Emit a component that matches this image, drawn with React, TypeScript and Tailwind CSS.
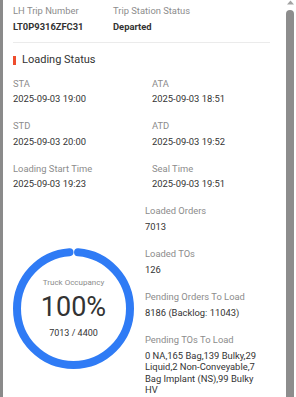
import React from "react";

const Item = ({ label, value, className = "" }: { label: string; value: React.ReactNode; className?: string }) => (
  <div className={className}>
    <div className="text-[9.4px] leading-[11.5px] text-[#8c8c8c]">{label}</div>
    <div className="mt-[4px] text-[9.4px] leading-[11.5px] text-[#333]">{value}</div>
  </div>
);

function Ring() {
  const size = 121;
  const sw = 8;
  const r = (size - sw) / 2;
  const c = 2 * Math.PI * r;
  const gap = 9.3;
  return (
    <div className="relative w-[121px] h-[121px] shrink-0">
      <svg width={size} height={size} viewBox={`0 0 ${size} ${size}`} className="block">
        <circle
          cx={size / 2}
          cy={size / 2}
          r={r}
          fill="none"
          stroke="#2f7bf5"
          strokeWidth={sw}
          strokeLinecap="round"
          strokeDasharray={`${c - gap} ${c}`}
          strokeDashoffset={-gap / 2}
          transform={`rotate(-90 ${size / 2} ${size / 2})`}
        />
      </svg>
      <div className="absolute inset-0 flex flex-col items-center pt-[30px]">
        <div className="text-[8px] leading-[10px] text-[#8c8c8c]">Truck Occupancy</div>
        <div className="mt-[4px] text-[27px] leading-[30px] text-[#333]">100%</div>
        <div className="mt-[5.5px] text-[9px] leading-[11px] text-[#333]">7013 / 4400</div>
      </div>
    </div>
  );
}

export default function App() {
  return (
    <div className="flex h-[397px] w-[296px] overflow-hidden bg-white" style={{ fontFamily: "Roboto, 'Liberation Sans', sans-serif" }}>
      <div className="w-[3px] shrink-0 bg-[#8a8a8a]" />
      <div className="flex-1 pl-[10px] pr-0">
        <div className="w-[257px]">
          <div className="grid grid-cols-[100px_1fr] pt-[5.25px]">
            <div>
              <div className="text-[9.4px] leading-[11.5px] text-[#8c8c8c]">LH Trip Number</div>
              <div className="mt-[4px] text-[9.4px] leading-[11.5px] font-bold text-[#333]">LT0P9316ZFC31</div>
            </div>
            <div>
              <div className="text-[9.4px] leading-[11.5px] text-[#8c8c8c]">Trip Station Status</div>
              <div className="mt-[4px] text-[9.4px] leading-[11.5px] font-bold text-[#333]">Departed</div>
            </div>
          </div>
          <div className="mt-[10px] h-px bg-[#ebebeb]" />
          <div className="mt-[9px] flex items-center h-[16px]">
            <div className="w-[3px] h-[9px] bg-[#ee4d2d]" />
            <div className="ml-[6px] text-[11px] leading-[16px] font-normal text-[#333]">Loading Status</div>
          </div>
          <div className="mt-[9.5px] grid grid-cols-[139px_1fr]">
            <Item label="STA" value="2025-09-03 19:00" className="mb-[15.5px]" />
            <Item label="ATA" value="2025-09-03 18:51" className="mb-[15.5px]" />
            <Item label="STD" value="2025-09-03 20:00" className="mb-[15.5px]" />
            <Item label="ATD" value="2025-09-03 19:52" className="mb-[15.5px]" />
            <Item label="Loading Start Time" value="2025-09-03 19:23" className="mb-[15.5px]" />
            <Item label="Seal Time" value="2025-09-03 19:51" className="mb-[15.5px]" />
          </div>
          <div className="flex items-center gap-[11px]">
            <Ring />
            <div className="w-[121px]">
              <Item label="Loaded Orders" value="7013" className="mb-[16px]" />
              <Item label="Loaded TOs" value="126" className="mb-[16px]" />
              <Item label="Pending Orders To Load" value="8186 (Backlog: 11043)" className="mb-[16px]" />
              <Item
                label="Pending TOs To Load"
                value="0 NA,165 Bag,139 Bulky,29 Liquid,2 Non-Conveyable,7 Bag Implant (NS),99 Bulky HV"
                className="mb-[16px]"
              />
            </div>
          </div>
        </div>
      </div>
      <div className="w-[13px] shrink-0 flex flex-col items-center bg-white">
        <svg width="7" height="5" viewBox="0 0 7 5" className="mt-[0px] ml-[1px]">
          <polygon points="3.5,0.5 7,4.5 0,4.5" fill="#a3a3a3" />
        </svg>
        <div className="mt-[5px] ml-[1px] w-[8px] flex-1 rounded-t-[4px] bg-[#8d8d8d]" />
      </div>
    </div>
  );
}
